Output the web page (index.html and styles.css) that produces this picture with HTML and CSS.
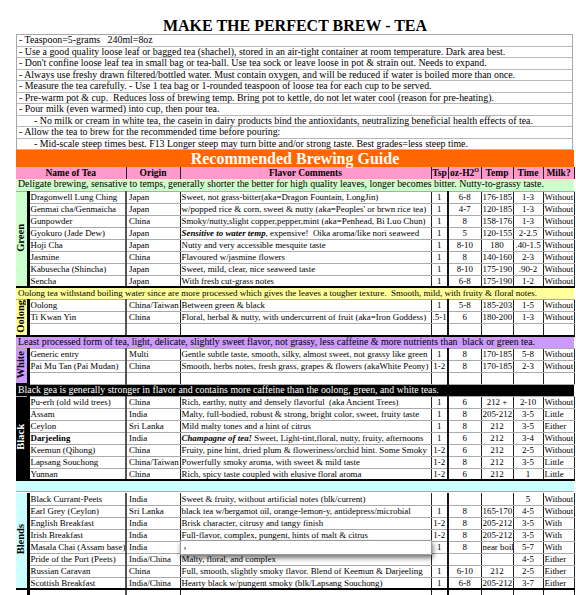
FILE: index.html
```html
<!DOCTYPE html>
<html lang="en">
<head>
<meta charset="utf-8">
<title>Make the Perfect Brew - Tea</title>
<link rel="stylesheet" href="styles.css">
</head>
<body>
<div class="page">
  <h1 class="title">MAKE THE PERFECT BREW - TEA</h1>
  <div class="notes">
    <div class="note">- Teaspoon=5-grams&nbsp;&nbsp; 240ml=8oz</div>
    <div class="note">- Use a good quality loose leaf or bagged tea (shachel), stored in an air-tight container at room temperature. Dark area best.</div>
    <div class="note">- Don't confine loose leaf tea in small bag or tea-ball. Use tea sock or leave loose in pot &amp; strain out. Needs to expand.</div>
    <div class="note">- Always use freshy drawn filtered/bottled water. Must contain oxygen, and will be reduced if water is boiled more than once.</div>
    <div class="note">- Measure the tea carefully. - Use 1 tea bag or 1-rounded teaspoon of loose tea for each cup to be served.</div>
    <div class="note">- Pre-warm pot &amp; cup.&nbsp; Reduces loss of brewing temp. Bring pot to kettle, do not let water cool (reason for pre-heating).</div>
    <div class="note">- Pour milk (even warmed) into cup, then pour tea.</div>
    <div class="note sub">- No milk or cream in white tea, the casein in dairy products bind the antioxidants, neutralizing beneficial health effects of tea.</div>
    <div class="note">- Allow the tea to brew for the recommended time before pouring:</div>
    <div class="note sub">- Mid-scale steep times best. F13 Longer steep may turn bitte and/or strong taste. Best grades=less steep time.</div>
  </div>
  <div class="banner">Recommended Brewing Guide</div>
  <table class="guide">
    <colgroup>
      <col class="w-lab"><col class="w-name"><col class="w-origin"><col class="w-flavor"><col class="w-tsp"><col class="w-oz"><col class="w-temp"><col class="w-time"><col class="w-milk">
    </colgroup>
    <tr class="head">
      <th colspan="2">Name of Tea</th><th>Origin</th><th>Flavor Comments</th><th>Tsp</th><th>oz-H2<sup>O</sup></th><th>Temp</th><th>Time</th><th>Milk?</th>
    </tr>

    <tr class="desc green"><td colspan="9">Deligate brewing, sensative to temps, generally shorter the better for high quality leaves, longer becomes bitter. Nutty-to-grassy taste.</td></tr>
    <tr><td class="lab green" rowspan="8"><span>Green</span></td><td class="name">Dragonwell Lung Ching</td><td>Japan</td><td>Sweet, not grass-bitter(aka=Dragon Fountain, LongJin)</td><td class="c">1</td><td class="c oz">6-8</td><td class="c">176-185</td><td class="c">1-3</td><td>Without</td></tr>
    <tr><td class="name">Genmai cha/Genmaicha</td><td>Japan</td><td>w/popped rice &amp; corn, sweet &amp; nutty (aka=Peoples' or brwn rice tea)</td><td class="c">1</td><td class="c oz">4-7</td><td class="c">120-185</td><td class="c">1-3</td><td>Without</td></tr>
    <tr><td class="name">Gunpowder</td><td>China</td><td>Smoky/nutty,slight copper,pepper,mint (aka=Penhead, Bi Luo Chun)</td><td class="c">1</td><td class="c oz">8</td><td class="c">158-176</td><td class="c">1-3</td><td>Without</td></tr>
    <tr><td class="name">Gyokuro (Jade Dew)</td><td>Japan</td><td><b><i>Sensitive to water temp</i></b>, expensive!&nbsp; Oika aroma/like nori seaweed</td><td class="c">1</td><td class="c oz">5</td><td class="c">120-155</td><td class="c">2-2.5</td><td>Without</td></tr>
    <tr><td class="name">Hoji Cha</td><td>Japan</td><td>Nutty and very accessible mesquite taste</td><td class="c">1</td><td class="c oz">8-10</td><td class="c">180</td><td class="c">.40-1.5</td><td>Without</td></tr>
    <tr><td class="name">Jasmine</td><td>China</td><td>Flavoured w/jasmine flowers</td><td class="c">1</td><td class="c oz">8</td><td class="c">140-160</td><td class="c">2-3</td><td>Without</td></tr>
    <tr><td class="name">Kabusecha (Shincha)</td><td>Japan</td><td>Sweet, mild, clear, nice seaweed taste</td><td class="c">1</td><td class="c oz">8-10</td><td class="c">175-190</td><td class="c">.90-2</td><td>Without</td></tr>
    <tr class="end"><td class="name">Sencha</td><td>Japan</td><td>With fresh cut-grass notes</td><td class="c">1</td><td class="c oz">6-8</td><td class="c">175-190</td><td class="c">1-2</td><td>Without</td></tr>

    <tr class="desc oolong small"><td colspan="9">Oolong tea withstand boiling water since are more processed which gives the leaves a tougher texture.&nbsp; Smooth, mild, with fruity &amp; floral notes.</td></tr>
    <tr><td class="lab oolong" rowspan="3"><span>Oolong</span></td><td class="name">Oolong</td><td>China/Taiwan</td><td>Between green &amp; black</td><td class="c">1</td><td class="c oz">5-8</td><td class="c">185-203</td><td class="c">1-5</td><td>Without</td></tr>
    <tr><td class="name">Ti Kwan Yin</td><td>China</td><td>Floral, herbal &amp; nutty, with undercurrent of fruit (aka=Iron Goddess)</td><td class="c">.5-1</td><td class="c oz">6</td><td class="c">180-200</td><td class="c">1-3</td><td>Without</td></tr>
    <tr class="end"><td class="name"></td><td></td><td></td><td></td><td class="oz"></td><td></td><td></td><td></td></tr>

    <tr class="desc white"><td colspan="9">Least processed form of tea, light, delicate, slightly sweet flavor, not grassy, less caffeine &amp; more nutrients than&nbsp; black or green tea.</td></tr>
    <tr><td class="lab white" rowspan="3"><span>White</span></td><td class="name">Generic entry</td><td>Multi</td><td>Gentle subtle taste, smooth, silky, almost sweet, not grassy like green</td><td class="c">1</td><td class="c oz">8</td><td class="c">170-185</td><td class="c">5-8</td><td>Without</td></tr>
    <tr><td class="name">Pai Mu Tan (Pai Mudan)</td><td>China</td><td>Smooth, herbs notes, fresh grass, grapes &amp; flowers (akaWhite Peony)</td><td class="c">1-2</td><td class="c oz">8</td><td class="c">170-185</td><td class="c">2-3</td><td>Without</td></tr>
    <tr><td class="name"></td><td></td><td></td><td></td><td class="oz"></td><td></td><td></td><td></td></tr>

    <tr class="desc black"><td colspan="9">Black gea is generally stronger in flavor and contains more caffeine than the oolong, green, and white teas.</td></tr>
    <tr><td class="lab black" rowspan="7"><span>Black</span></td><td class="name">Pu-erh (old wild trees)</td><td>China</td><td>Rich, earthy, nutty and densely flavorful&nbsp; (aka Ancient Trees)</td><td class="c">1</td><td class="c oz">6</td><td class="c">212 +</td><td class="c">2-10</td><td>Without</td></tr>
    <tr><td class="name">Assam</td><td>India</td><td>Malty, full-bodied, robust &amp; strong, bright color, sweet, fruity taste</td><td class="c">1</td><td class="c oz">8</td><td class="c">205-212</td><td class="c">3-5</td><td>Little</td></tr>
    <tr><td class="name">Ceylon</td><td>Sri Lanka</td><td>Mild malty tones and a hint of citrus</td><td class="c">1</td><td class="c oz">8</td><td class="c">212</td><td class="c">3-5</td><td>Either</td></tr>
    <tr><td class="name"><b>Darjeeling</b></td><td>India</td><td><b><i>Champagne of tea!</i></b> Sweet, Light-tint,floral, nutty, fruity, afternoons</td><td class="c">1</td><td class="c oz">6</td><td class="c">212</td><td class="c">3-4</td><td>Without</td></tr>
    <tr><td class="name">Keemun (Qihong)</td><td>China</td><td>Fruity, pine hint, dried plum &amp; floweriness/orchid hint. Some Smoky</td><td class="c">1-2</td><td class="c oz">6</td><td class="c">212</td><td class="c">2-5</td><td>Without</td></tr>
    <tr><td class="name">Lapsang Souchong</td><td>China/Taiwan</td><td>Powerfully smoky aroma, with sweet &amp; mild taste</td><td class="c">1-2</td><td class="c oz">8</td><td class="c">212</td><td class="c">3-5</td><td>Little</td></tr>
    <tr class="end"><td class="name">Yunnan</td><td>China</td><td>Rich, spicy taste coupled with elusive floral aroma</td><td class="c">1-2</td><td class="c oz">6</td><td class="c">212</td><td class="c">1</td><td>Little</td></tr>

    <tr class="desc blends"><td colspan="9"></td></tr>
    <tr class="gap"><td colspan="9"></td></tr>
    <tr><td class="lab blends" rowspan="8"><span>Blends</span></td><td class="name">Black Currant-Peets</td><td>India</td><td>Sweet &amp; fruity, without artificial notes (blk/current)</td><td class="c"></td><td class="c oz"></td><td class="c"></td><td class="c">5</td><td>Without</td></tr>
    <tr><td class="name">Earl Grey (Ceylon)</td><td>Sri Lanka</td><td>black tea w/bergamot oil, orange-lemon-y, antidepress/microbial</td><td class="c">1</td><td class="c oz">8</td><td class="c">165-170</td><td class="c">4-5</td><td>Without</td></tr>
    <tr><td class="name">English Breakfast</td><td>India</td><td>Brisk character, citrusy and tangy finish</td><td class="c">1-2</td><td class="c oz">8</td><td class="c">205-212</td><td class="c">3-5</td><td>With</td></tr>
    <tr><td class="name">Irish Breakfast</td><td>India</td><td>Full-flavor, complex, pungent, hints of malt &amp; citrus</td><td class="c">1-2</td><td class="c oz">8</td><td class="c">205-212</td><td class="c">3-5</td><td>With</td></tr>
    <tr><td class="name">Masala Chai (Assam base)</td><td>India</td><td class="popcell"><div class="popup">&rsaquo;</div></td><td class="c">1</td><td class="c oz">8</td><td class="c">near boil</td><td class="c">5-7</td><td>With</td></tr>
    <tr><td class="name">Pride of the Port (Peets)</td><td>India/China</td><td>Malty, floral, and complex</td><td class="c"></td><td class="c oz"></td><td class="c"></td><td class="c">4-5</td><td>Either</td></tr>
    <tr><td class="name">Russian Caravan</td><td>China</td><td>Full, smooth, slightly smoky flavor. Blend of Keemun &amp; Darjeeling</td><td class="c">1</td><td class="c oz">6-10</td><td class="c">212</td><td class="c">2-5</td><td>Either</td></tr>
    <tr class="end"><td class="name">Scottish Breakfast</td><td>India/China</td><td>Hearty black w/pungent smoky (blk/Lapsang Souchong)</td><td class="c">1</td><td class="c oz">6-8</td><td class="c">205-212</td><td class="c">3-7</td><td>Either</td></tr>
    <tr><td class="lab"></td><td class="name"></td><td></td><td></td><td></td><td class="oz"></td><td></td><td></td><td></td></tr>
  </table>
</div>
</body>
</html>
```

FILE: styles.css
```css
* { box-sizing: border-box; }

body {
  margin: 0;
  background: #ffffff;
  color: #000000;
  font-family: "Liberation Serif", "Times New Roman", serif;
}

.page {
  width: 558px;
  margin-left: 16px;
  padding-top: 17px;
}

.title {
  margin: 0;
  font-size: 16px;
  line-height: 17px;
  font-weight: bold;
  text-align: center;
}

.notes {
  width: 557px;
  border: 1px solid #a8a8a8;
  border-bottom: none;
  font-size: 9.9px;
}

.note {
  line-height: 10.5px;
  border-bottom: 1px solid #b8b8b8;
  padding-left: 2px;
  white-space: nowrap;
  overflow: hidden;
}

.note.sub { padding-left: 17px; }

.banner {
  background: #ff6600;
  color: #ffffff;
  font-weight: bold;
  font-size: 16px;
  line-height: 17px;
  text-align: center;
}

.guide {
  width: 558px;
  table-layout: fixed;
  border-collapse: collapse;
  font-size: 8.9px;
}

.w-lab { width: 12px; }
.w-name { width: 98px; }
.w-origin { width: 54px; }
.w-flavor { width: 251px; }
.w-tsp { width: 17px; }
.w-oz { width: 33px; }
.w-temp { width: 32px; }
.w-time { width: 30px; }
.w-milk { width: 31px; }

.guide tr { height: 12px; }

.guide td {
  padding: 0 1px;
  line-height: 10.6px;
  border-left: 1px solid #222;
  border-right: 1px solid #222;
  border-bottom: 1px solid #aaaaaa;
  white-space: nowrap;
  overflow: hidden;
  vertical-align: middle;
}

.guide td.name { border-left: none; padding-left: 1px; }
.guide td.name + td { border-left: 2px solid #555; padding-left: 2px; }
.guide td.popcell { overflow: visible; position: relative; }
.guide td.oz { border-left: 2px solid #111; }

.c { text-align: center; }

.head th {
  background: #ff99cc;
  font-size: 9.5px;
  font-weight: bold;
  line-height: 10.6px;
  padding: 0;
  border-left: 1px solid #222;
  border-right: 1px solid #222;
  text-align: center;
  white-space: nowrap;
}

.head th:first-child { border-left: none; }

.head sup {
  font-size: 6px;
  line-height: 0;
  vertical-align: 4px;
}

.guide tr.desc td {
  font-size: 9.85px;
  border-left: none;
  border-right: none;
  border-bottom: 1px solid #aaaaaa;
  padding-left: 2px;
}

.guide tr.desc.small td { font-size: 9px; }

.green { background: #ccffcc; }
.oolong { background: #ffff99; }
.white { background: #cc99ff; }
.black { background: #000000; color: #ffffff; }
.blends { background: #ccffff; }

.guide tr.desc.blends { height: 11px; }

.guide tr.gap { height: 2px; }

.guide tr.gap td {
  height: 2px;
  line-height: 0;
  font-size: 0;
  border: none;
  background: #ffffff;
}

.guide tr.end td { border-bottom: 2px solid #000000; }

.guide td.lab {
  padding: 0;
  text-align: center;
  vertical-align: middle;
  border-left: none;
  border-right: 3px solid #000000;
  border-bottom: 2px solid #000000;
}

.lab span {
  display: inline-block;
  writing-mode: vertical-rl;
  transform: rotate(180deg);
  font-size: 10.5px;
  font-weight: bold;
  line-height: 10px;
}

.popup {
  position: absolute;
  left: -1px;
  right: -1px;
  top: -2px;
  height: 15px;
  padding-left: 3px;
  line-height: 13px;
  background: #ffffff;
  border: 1px solid #9a9a9a;
  box-shadow: 1px 3px 5px rgba(0, 0, 0, 0.55);
  z-index: 2;
}
```
